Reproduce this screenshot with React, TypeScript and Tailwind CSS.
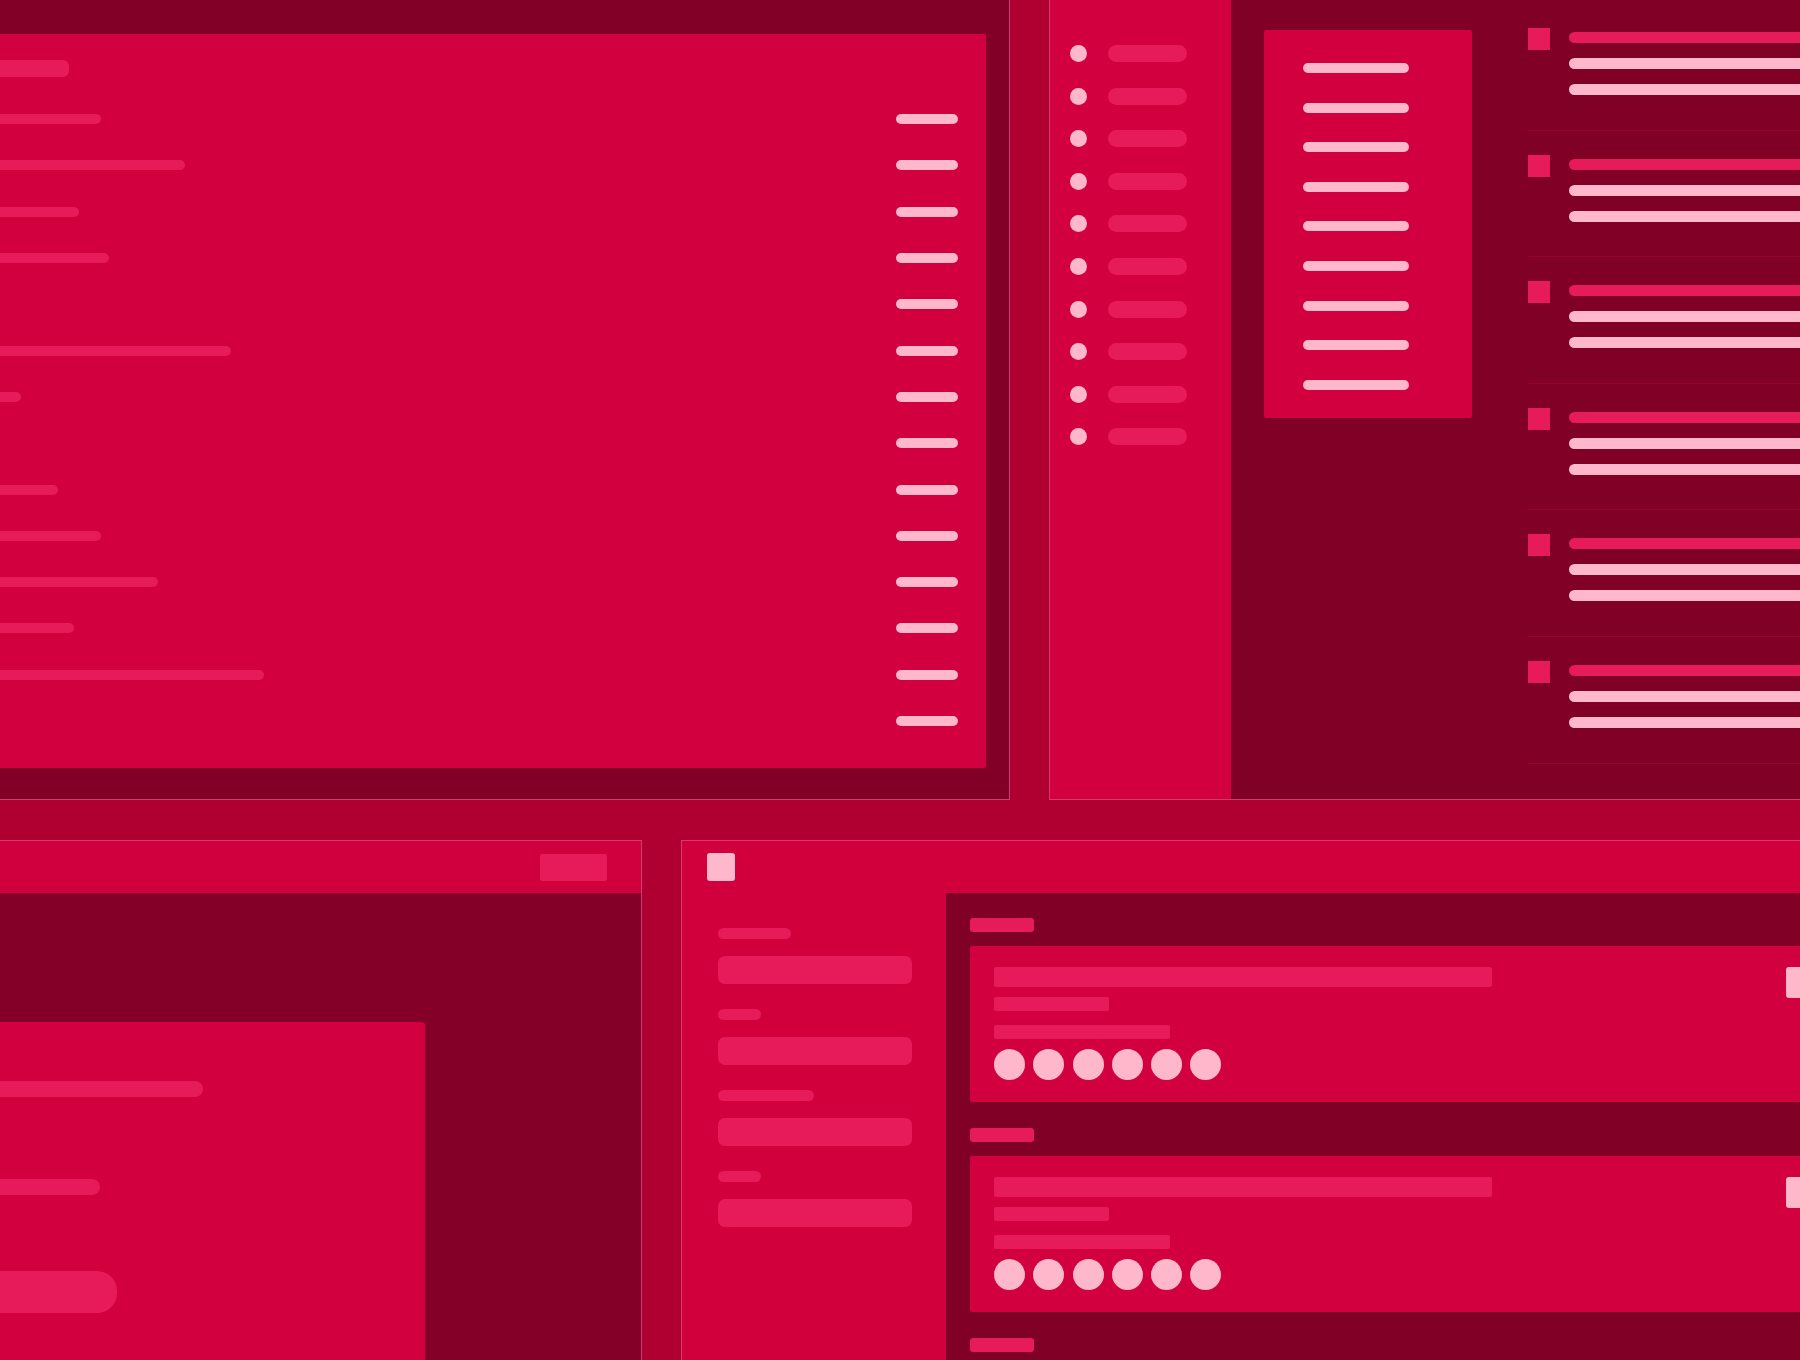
import React from "react";

const rowsA = [101, 185, 79, 109, 0, 231, 21, 0, 58, 101, 158, 74, 264, 0];
const sideLabels = [73, 43, 96, 43];

function ListRow() {
  return (
    <div className="h-[126.6px] shrink-0 border-b border-[#9a0031] pt-[24px] flex gap-[19px]">
      <div className="w-[22px] h-[22px] shrink-0 bg-[#e71a5a]" />
      <div className="flex-1 flex flex-col gap-[15px] pt-[4px]">
        <div className="h-[11px] rounded-l-full bg-[#e71a5a]" />
        <div className="h-[11px] rounded-l-full bg-[#ffb7cb]" />
        <div className="h-[11px] rounded-l-full bg-[#ffb7cb]" />
      </div>
    </div>
  );
}

function ResultCard() {
  return (
    <div className="mb-[26px]">
      <div className="w-[64px] h-[14px] rounded-[3px] bg-[#e71a5a]" />
      <div className="mt-[14px] w-[871px] h-[156px] bg-[#d2003f] rounded-[2px] pt-[21px] px-[24px] flex justify-between">
        <div className="flex flex-col">
          <div className="w-[498px] h-[20px] rounded-[2px] bg-[#e71a5a]" />
          <div className="mt-[10px] w-[115px] h-[14px] rounded-[2px] bg-[#e71a5a]" />
          <div className="mt-[14px] w-[176px] h-[14px] rounded-[2px] bg-[#e71a5a]" />
          <div className="mt-[10px] flex gap-[8.3px]">
            {[0, 1, 2, 3, 4, 5].map((i) => (
              <div key={i} className="w-[31px] h-[31px] rounded-full bg-[#ffb7cb]" />
            ))}
          </div>
        </div>
        <div className="w-[31px] h-[31px] rounded-[3px] bg-[#ffb7cb]" />
      </div>
    </div>
  );
}

export default function App() {
  return (
    <div className="w-[1800px] h-[1360px] overflow-hidden bg-[#b00032] flex flex-col gap-[40px]">
      {/* Top row */}
      <div className="flex h-[800px] shrink-0 gap-[39px]">
        {/* Panel A */}
        <div className="w-[1010px] h-[800px] shrink-0 bg-[#820027] border-r border-b border-[#d63a6a] pt-[34px] pr-[23px] pb-[31px]">
          <div className="h-full bg-[#d2003f] rounded-r-[2px] pt-[26px] pr-[28px] flex flex-col">
            <div className="h-[17px] w-[69px] rounded-r-[6px] bg-[#e71a5a]" />
            <div className="mt-[19px] flex flex-col">
              {rowsA.map((w, i) => (
                <div key={i} className="h-[46.3px] flex items-center justify-between">
                  <div className="h-[10px] rounded-r-full bg-[#e71a5a]" style={{ width: w }} />
                  <div className="h-[10px] w-[62px] rounded-full bg-[#ffb7cb]" />
                </div>
              ))}
            </div>
          </div>
        </div>

        {/* Panel B */}
        <div className="w-[751px] h-[800px] shrink-0 bg-[#800026] border-l border-b border-[#d63a6a] flex">
          <div className="w-[181px] h-full shrink-0 bg-[#d2003f] pt-[45px] pl-[20px] flex flex-col gap-[25.6px]">
            {[0, 1, 2, 3, 4, 5, 6, 7, 8, 9].map((i) => (
              <div key={i} className="flex items-center gap-[21px]">
                <div className="w-[17px] h-[17px] rounded-full bg-[#ffb7cb]" />
                <div className="w-[79px] h-[17px] rounded-full bg-[#e71a5a]" />
              </div>
            ))}
          </div>
          <div className="flex-1 flex min-w-0">
            <div className="ml-[33px] mt-[30px] w-[208px] h-[388px] shrink-0 bg-[#d2003f] rounded-[2px] pt-[33px] pl-[39px] flex flex-col gap-[29.6px]">
              {[0, 1, 2, 3, 4, 5, 6, 7, 8].map((i) => (
                <div key={i} className="w-[106px] h-[10px] rounded-full bg-[#ffb7cb]" />
              ))}
            </div>
            <div className="ml-[56px] pt-[4px] flex-1 flex flex-col">
              {[0, 1, 2, 3, 4, 5].map((i) => (
                <ListRow key={i} />
              ))}
            </div>
          </div>
        </div>
      </div>

      {/* Bottom row */}
      <div className="flex h-[520px] shrink-0 gap-[39px]">
        {/* Panel C */}
        <div className="w-[642px] h-full shrink-0 bg-[#850028] border-t border-r border-[#d63a6a] flex flex-col">
          <div className="h-[52px] shrink-0 bg-[#cf003d] flex items-center justify-end pr-[34px]">
            <div className="w-[67px] h-[27px] rounded-[2px] bg-[#e71a5a]" />
          </div>
          <div className="flex-1 pt-[129px] flex flex-col">
            <div className="w-[425px] flex-1 bg-[#d2003f] rounded-tr-[4px] pt-[59px] flex flex-col">
              <div className="w-[203px] h-[16px] rounded-r-full bg-[#e71a5a]" />
              <div className="mt-[82px] w-[100px] h-[16px] rounded-r-full bg-[#e71a5a]" />
              <div className="mt-[76px] w-[117px] h-[42px] rounded-r-[20px] bg-[#e71a5a]" />
            </div>
          </div>
        </div>

        {/* Panel D */}
        <div className="w-[1200px] h-full shrink-0 border-t border-l border-[#d63a6a] flex flex-col">
          <div className="h-[52px] shrink-0 bg-[#d1003d] flex items-center pl-[25px]">
            <div className="w-[28px] h-[28px] rounded-[3px] bg-[#ffb7cb]" />
          </div>
          <div className="flex-1 flex">
            <div className="w-[264px] shrink-0 bg-[#d1003d] pt-[35px] pl-[36px] flex flex-col">
              {sideLabels.map((w, i) => (
                <div key={i} className="mb-[25px]">
                  <div className="h-[11px] rounded-full bg-[#e71a5a]" style={{ width: w }} />
                  <div className="mt-[17px] w-[194px] h-[28px] rounded-[7px] bg-[#e71a5a]" />
                </div>
              ))}
            </div>
            <div className="flex-1 bg-[#800026] pt-[25px] pl-[24px] flex flex-col">
              <ResultCard />
              <ResultCard />
              <ResultCard />
            </div>
          </div>
        </div>
      </div>
    </div>
  );
}
